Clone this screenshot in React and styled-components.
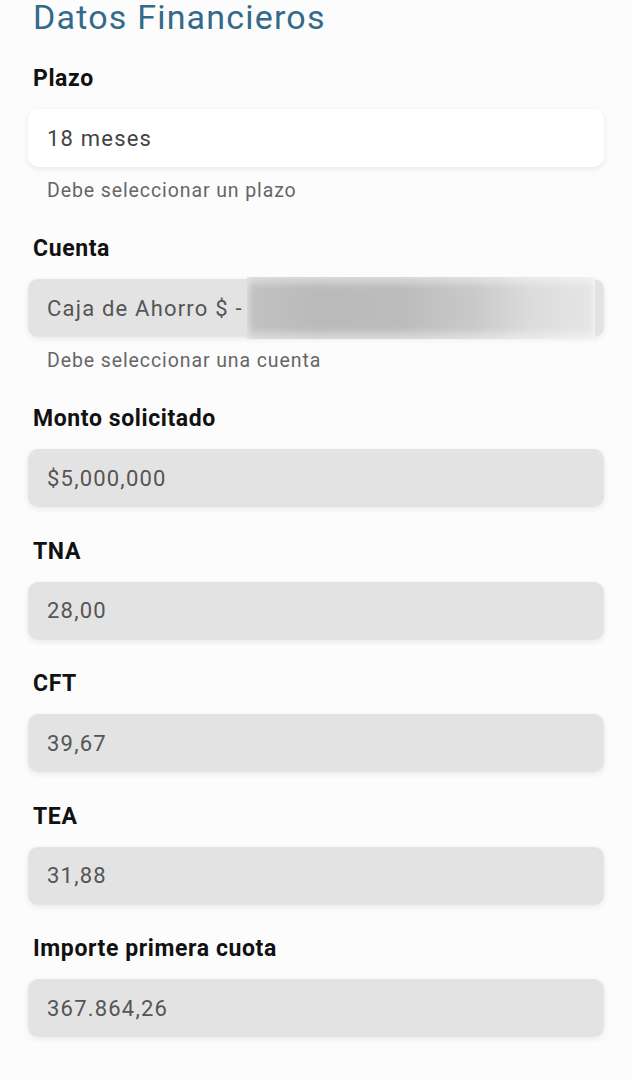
import React from "react"
import styled, { createGlobalStyle } from "styled-components"

const GlobalStyle = createGlobalStyle`
  html, body {
    margin: 0;
    padding: 0;
    background: #fcfcfc;
    font-family: Roboto, "Liberation Sans", sans-serif;
  }
`

const Page = styled.div`
  display: flex;
  flex-direction: column;
  padding: 0 28px;
  height: 1080px;
  box-sizing: border-box;
  overflow: hidden;
`

const Title = styled.h1`
  margin: 0 0 32px 5px;
  font-size: 34px;
  line-height: 34px;
  font-weight: 400;
  letter-spacing: 1.2px;
  color: #336a8c;
`

const Section = styled.div`
  display: flex;
  flex-direction: column;
  margin-bottom: ${p => (p.$helper ? "33px" : "31.5px")};
`

const Label = styled.label`
  margin: 0 0 17px 5px;
  font-size: 23px;
  line-height: 26px;
  font-weight: 700;
  letter-spacing: 0.6px;
  color: #111;
`

const Field = styled.div`
  position: relative;
  display: flex;
  align-items: center;
  height: 58px;
  padding: 0 19px;
  border-radius: 10px;
  background: ${p => (p.$disabled ? "#e3e3e3" : "#ffffff")};
  box-shadow: 0 2px 6px rgba(0, 0, 0, 0.08);
  font-size: 22px;
  letter-spacing: 1.2px;
  color: ${p => (p.$disabled ? "#555" : "#444")};
`

const Helper = styled.div`
  margin: 12px 0 0 19px;
  font-size: 19.5px;
  line-height: 24px;
  letter-spacing: 0.9px;
  color: #666;
`

const Redacted = styled.div`
  position: absolute;
  left: 219px;
  right: 9px;
  top: -2px;
  bottom: -2px;
  background: linear-gradient(
    90deg,
    #c2c2c2 0%,
    #bababa 20%,
    #bcbcbc 45%,
    #c9c9c9 65%,
    #dcdcdc 82%,
    #e6e6e6 100%
  );
  box-shadow: inset 0 6px 8px rgba(255, 255, 255, 0.45),
    inset 0 -6px 8px rgba(255, 255, 255, 0.45);
`

const fields = [
  { label: "Plazo", value: "18 meses", helper: "Debe seleccionar un plazo" },
  {
    label: "Cuenta",
    value: "Caja de Ahorro $ -",
    helper: "Debe seleccionar una cuenta",
    disabled: true,
    redacted: true,
  },
  { label: "Monto solicitado", value: "$5,000,000", disabled: true },
  { label: "TNA", value: "28,00", disabled: true },
  { label: "CFT", value: "39,67", disabled: true },
  { label: "TEA", value: "31,88", disabled: true },
  { label: "Importe primera cuota", value: "367.864,26", disabled: true },
]

const App = () => {
  return (
    <>
      <GlobalStyle />
      <Page>
        <Title>Datos Financieros</Title>
        {fields.map(f => (
          <Section key={f.label} $helper={!!f.helper}>
            <Label>{f.label}</Label>
            <Field $disabled={f.disabled}>
              {f.value}
              {f.redacted && <Redacted />}
            </Field>
            {f.helper && <Helper>{f.helper}</Helper>}
          </Section>
        ))}
      </Page>
    </>
  )
}

export default App
